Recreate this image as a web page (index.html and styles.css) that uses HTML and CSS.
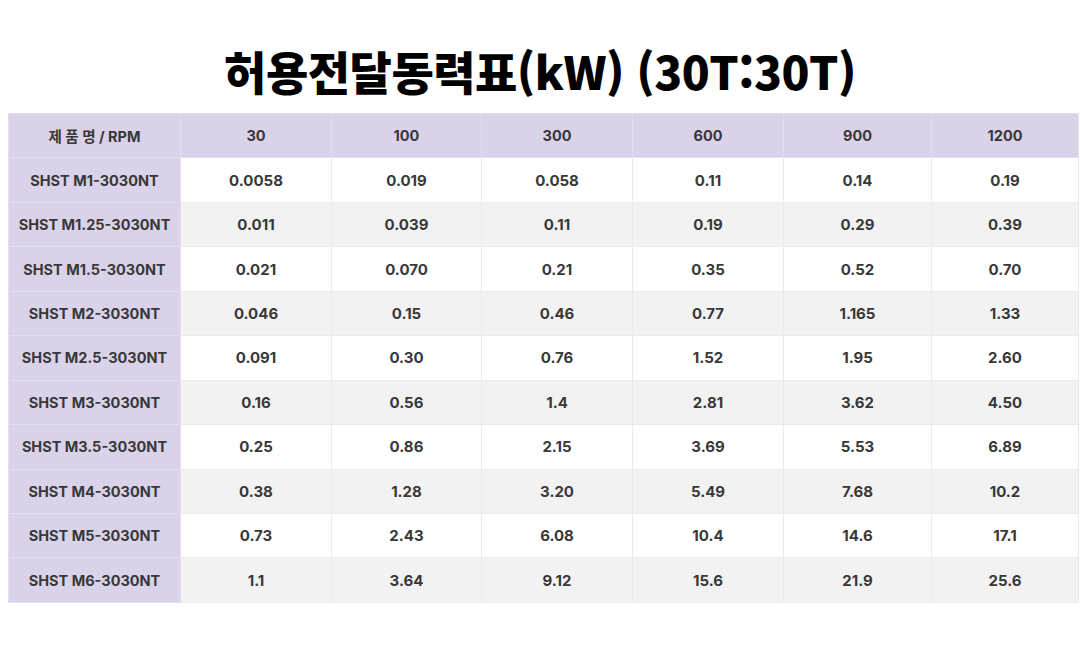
FILE: index.html
```html
<!DOCTYPE html>
<html lang="ko">
<head>
<meta charset="utf-8">
<title>허용전달동력표</title>
<link rel="stylesheet" href="styles.css">
</head>
<body>
<h1 class="title">허용전달동력표(kW) (30T:30T)</h1>
<table class="power">
  <colgroup>
    <col class="c0"><col class="c1"><col class="c2"><col class="c3"><col class="c4"><col class="c5"><col class="c6">
  </colgroup>
  <thead>
    <tr><th>제 품 명 / RPM</th><th>30</th><th>100</th><th>300</th><th>600</th><th>900</th><th>1200</th></tr>
  </thead>
  <tbody>
    <tr><th>SHST M1-3030NT</th><td>0.0058</td><td>0.019</td><td>0.058</td><td>0.11</td><td>0.14</td><td>0.19</td></tr>
    <tr><th>SHST M1.25-3030NT</th><td>0.011</td><td>0.039</td><td>0.11</td><td>0.19</td><td>0.29</td><td>0.39</td></tr>
    <tr><th>SHST M1.5-3030NT</th><td>0.021</td><td>0.070</td><td>0.21</td><td>0.35</td><td>0.52</td><td>0.70</td></tr>
    <tr><th>SHST M2-3030NT</th><td>0.046</td><td>0.15</td><td>0.46</td><td>0.77</td><td>1.165</td><td>1.33</td></tr>
    <tr><th>SHST M2.5-3030NT</th><td>0.091</td><td>0.30</td><td>0.76</td><td>1.52</td><td>1.95</td><td>2.60</td></tr>
    <tr><th>SHST M3-3030NT</th><td>0.16</td><td>0.56</td><td>1.4</td><td>2.81</td><td>3.62</td><td>4.50</td></tr>
    <tr><th>SHST M3.5-3030NT</th><td>0.25</td><td>0.86</td><td>2.15</td><td>3.69</td><td>5.53</td><td>6.89</td></tr>
    <tr><th>SHST M4-3030NT</th><td>0.38</td><td>1.28</td><td>3.20</td><td>5.49</td><td>7.68</td><td>10.2</td></tr>
    <tr><th>SHST M5-3030NT</th><td>0.73</td><td>2.43</td><td>6.08</td><td>10.4</td><td>14.6</td><td>17.1</td></tr>
    <tr><th>SHST M6-3030NT</th><td>1.1</td><td>3.64</td><td>9.12</td><td>15.6</td><td>21.9</td><td>25.6</td></tr>
  </tbody>
</table>
</body>
</html>
```

FILE: styles.css
```css
html, body {
  margin: 0;
  padding: 0;
  background: #ffffff;
}
body {
  width: 1080px;
  height: 648px;
  overflow: hidden;
}
.title {
  margin: 0;
  height: 113px;
  padding-top: 47px;
  box-sizing: border-box;
  text-align: center;
  font-family: "Noto Sans CJK KR", "Noto Sans", sans-serif;
  font-weight: 900;
  font-size: 46px;
  line-height: 1;
  color: #000000;
  letter-spacing: -0.5px;
}
.power {
  margin: 0 0 0 8px;
  width: 1070px;
  border-collapse: collapse;
  table-layout: fixed;
  font-family: Inter, "Noto Sans CJK KR", sans-serif;
  font-weight: 700;
  font-size: 15px;
  color: #383838;
}
.c0 { width: 172px; }
.c1 { width: 151px; }
.c2 { width: 150px; }
.c3 { width: 151px; }
.c4 { width: 151px; }
.c5 { width: 148px; }
.c6 { width: 147px; }
.power th, .power td {
  height: 43.45px;
  padding: 0;
  text-align: center;
  vertical-align: middle;
  border: 1px solid #ebebeb;
  font-weight: 700;
  white-space: nowrap;
}
.power thead th {
  background: #dad2e9;
  border-color: #e4def0;
  font-size: 14.5px;
}
.power tbody th {
  background: #dad2e9;
  border-color: #e4def0;
  font-size: 14.5px;
  letter-spacing: 0;
}
.power tbody tr:nth-child(odd) td { background: #ffffff; }
.power tbody tr:nth-child(even) td { background: #f2f2f2; }
```
